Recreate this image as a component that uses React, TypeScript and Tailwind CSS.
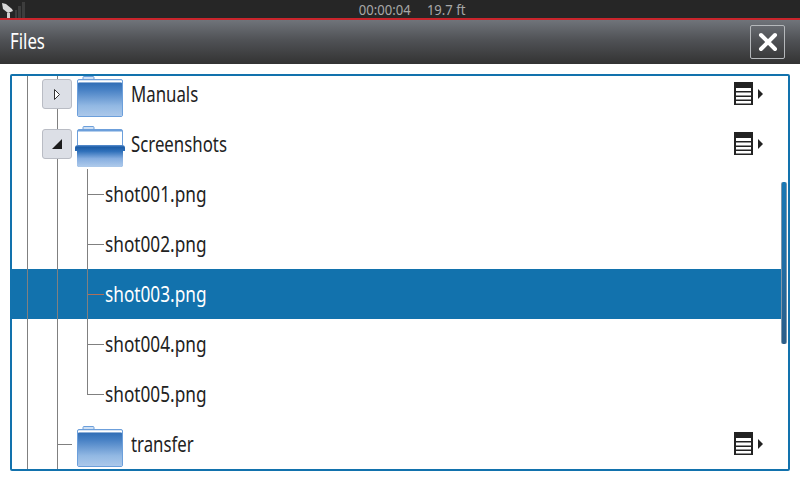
import { Fragment } from "react";

function Folder({ open }: { open?: boolean }) {
  return (
    <svg width="50" height="41" viewBox="0 0 50 41" className="mt-[5px] shrink-0">
      <defs>
        <linearGradient id="folder-closed" gradientUnits="userSpaceOnUse" x1="0" y1="6" x2="0" y2="40">
          <stop offset="0" stopColor="#2f6cb4" />
          <stop offset="0.25" stopColor="#4a83c6" />
          <stop offset="0.7" stopColor="#92b8e3" />
          <stop offset="1" stopColor="#abc8ea" />
        </linearGradient>
        <linearGradient id="folder-open" gradientUnits="userSpaceOnUse" x1="0" y1="19" x2="0" y2="40">
          <stop offset="0" stopColor="#5f93d2" />
          <stop offset="0.1" stopColor="#1c5ca6" />
          <stop offset="0.3" stopColor="#2f70ba" />
          <stop offset="0.65" stopColor="#86aee0" />
          <stop offset="1" stopColor="#abc8ea" />
        </linearGradient>
      </defs>
      <path d="M8 3.5 V1.5 Q8 .5 9 .5 H18 Q19 .5 19 1.5 V3.5" fill="#cfe0f4" stroke="#6c9fdb" />
      <rect x="2.5" y="3.5" width="45" height="37" rx="1.5" fill={open ? "#ffffff" : "#dbe7f6"} stroke="#6c9fdb" />
      {open ? (
        <Fragment>
          <rect x="3" y="4" width="44" height="1.5" fill="#6c9fdb" />
          <path d="M0 22 Q0 19 3 19 H47 Q50 19 50 22 V25 H48 V39 Q48 41 46 41 H4 Q2 41 2 39 V25 H0 Z" fill="url(#folder-open)" />
        </Fragment>
      ) : (
        <Fragment>
          <rect x="3" y="5" width="44" height="1.5" fill="#ffffff" />
          <rect x="3" y="6.5" width="44" height="33.5" rx="1" fill="url(#folder-closed)" />
        </Fragment>
      )}
    </svg>
  );
}

function MenuIcon() {
  return (
    <div className="ml-auto mr-[18px] -mt-px flex items-center gap-[5px]">
      <svg width="19" height="23" viewBox="0 0 19 23">
        <rect width="19" height="23" fill="#222222" />
        <rect x="2" y="6" width="15" height="3" fill="#ffffff" />
        <rect x="2" y="10.5" width="15" height="3" fill="#ffffff" />
        <rect x="2" y="15" width="15" height="2.5" fill="#ffffff" />
        <rect x="2" y="19" width="15" height="2.5" fill="#ffffff" />
      </svg>
      <svg width="5" height="10" viewBox="0 0 5 10">
        <path d="M0 0 L5 5 L0 10 Z" fill="#222222" />
      </svg>
    </div>
  );
}

function Guide({ width = "w-[30px]", end }: { width?: string; end?: boolean }) {
  return (
    <div className={`relative h-full shrink-0 ${width}`}>
      <div className={`absolute left-0 top-0 w-px bg-[#808080] ${end ? "h-1/2" : "h-full"}`} />
    </div>
  );
}

function ExpandButton({ open }: { open?: boolean }) {
  return (
    <div className="absolute left-[-15px] top-[10px] flex h-[30px] w-[30px] items-center justify-center rounded-[3px] border border-[#b9bcc4] bg-[#dcdfe6]">
      {open ? (
        <svg width="10" height="10" viewBox="0 0 10 10">
          <path d="M10 0 V10 H0 Z" fill="#1c1c1c" />
        </svg>
      ) : (
        <svg width="6" height="11" viewBox="0 0 6 11">
          <path d="M.5 .5 L5.5 5.5 L.5 10.5 Z" fill="#ffffff" stroke="#333333" />
        </svg>
      )}
    </div>
  );
}

function FolderRow({ name, open, expandable }: { name: string; open?: boolean; expandable?: boolean }) {
  return (
    <div className="relative flex h-[50px] items-center pl-[15px]">
      <Guide />
      <div className="relative h-full w-[18px] shrink-0">
        <div className="absolute left-0 top-0 h-full w-px bg-[#808080]" />
        {expandable ? (
          <ExpandButton open={open} />
        ) : (
          <div className="absolute left-0 top-[25px] h-px w-[15px] bg-[#808080]" />
        )}
      </div>
      <Folder open={open} />
      <span className="ml-[6px] mt-[2px] origin-left scale-x-[0.8] text-[#222222]">{name}</span>
      <MenuIcon />
    </div>
  );
}

function FileRow({ name, selected, last }: { name: string; selected?: boolean; last?: boolean }) {
  return (
    <div className={`flex h-[50px] items-center pl-[15px] ${selected ? "bg-[#1272ad] text-white" : "text-[#222222]"}`}>
      <Guide />
      <Guide />
      <Guide width="w-[17px]" end={last} />
      <div className={`-ml-[17px] h-px w-[17px] shrink-0 ${selected ? "bg-[#b0705a]" : "bg-[#808080]"}`} />
      <span className="ml-px mt-[2px] origin-left scale-x-[0.82]">{name}</span>
    </div>
  );
}

const files = ["shot001.png", "shot002.png", "shot003.png", "shot004.png", "shot005.png"];

export default function App() {
  return (
    <div className="flex h-[480px] w-[800px] flex-col overflow-hidden bg-white font-['Noto_Sans',sans-serif]">
      <div className="relative flex h-[18px] shrink-0 items-center justify-center gap-[10px] bg-[#262626] pl-[23px] text-[15px] text-[#a8a8a8]">
        <svg width="28" height="18" viewBox="0 0 28 18" className="absolute left-0 top-0">
          <rect x="15" y="10" width="2" height="8" fill="#3d3d3d" />
          <rect x="18" y="6" width="3" height="12" fill="#3d3d3d" />
          <rect x="22" y="2" width="3" height="16" fill="#3d3d3d" />
          <path d="M2 3 L6 4 L12 9 L13 11 L8 13 L3 9 Z" fill="#d8d8d8" />
          <rect x="7" y="13" width="3" height="5" fill="#cfcfcf" />
        </svg>
        <span className="scale-x-[0.87]">00:00:04</span>
        <span className="scale-x-[0.87]">19.7 ft</span>
      </div>
      <div className="h-[2px] shrink-0 bg-[#c9252c]" />
      <div className="flex h-[44px] shrink-0 items-center justify-between bg-[linear-gradient(#70747a,#505256_45%,#333333)] pl-[10px] pr-[15px]">
        <span className="origin-left scale-x-[0.8] text-[21px] text-white">Files</span>
        <button className="flex h-[34px] w-[35px] items-center justify-center rounded-[2px] border border-[#b5b8bb]">
          <svg width="20" height="20" viewBox="0 0 20 20">
            <path d="M3 3 L17 17 M17 3 L3 17" stroke="#ffffff" strokeWidth="4" strokeLinecap="round" />
          </svg>
        </button>
      </div>
      <div className="flex-1 px-[10px] pb-[10px] pt-[10px]">
        <div className="relative h-full overflow-hidden rounded-[2px] border-2 border-[#1272ad] text-[21px]">
          <div className="-mt-[7px] pr-[7px]">
            <FolderRow name="Manuals" expandable />
            <FolderRow name="Screenshots" expandable open />
            {files.map((file, i) => (
              <FileRow key={file} name={file} selected={i === 2} last={i === files.length - 1} />
            ))}
            <FolderRow name="transfer" />
          </div>
          <div className="absolute right-px top-[106px] h-[162px] w-[6px] rounded-[2px] border-x border-[#7f97ab] bg-[linear-gradient(#1a78b4,#1f6ea6_50%,#2b5d88)]" />
        </div>
      </div>
    </div>
  );
}
